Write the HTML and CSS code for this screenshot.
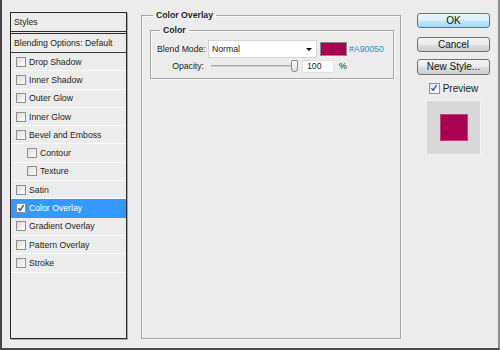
FILE: index.html
```html
<!DOCTYPE html>
<html>
<head>
<meta charset="utf-8">
<link rel="stylesheet" href="styles.css">
</head>
<body>
<div class="window">
  <div class="styles-panel">
    <div class="hdr">Styles</div>
    <div class="blend">Blending Options: Default</div>
    <div class="row"><span class="cb"></span>Drop Shadow</div>
    <div class="row"><span class="cb"></span>Inner Shadow</div>
    <div class="row"><span class="cb"></span>Outer Glow</div>
    <div class="row"><span class="cb"></span>Inner Glow</div>
    <div class="row"><span class="cb"></span>Bevel and Emboss</div>
    <div class="row sub"><span class="cb"></span>Contour</div>
    <div class="row sub"><span class="cb"></span>Texture</div>
    <div class="row"><span class="cb"></span>Satin</div>
    <div class="row sel"><span class="cb checked"><svg viewBox="0 0 8 8" width="8" height="8"><path d="M1.5 4.2 L3.2 6.3 L6.6 1.2" fill="none" stroke="#2c4f9e" stroke-width="1.3"/></svg></span>Color Overlay</div>
    <div class="row"><span class="cb"></span>Gradient Overlay</div>
    <div class="row"><span class="cb"></span>Pattern Overlay</div>
    <div class="row"><span class="cb"></span>Stroke</div>
  </div>

  <fieldset class="group outer">
    <legend>Color Overlay</legend>
    <fieldset class="group inner">
      <legend>Color</legend>
      <div class="frow">
        <span class="lbl">Blend Mode:</span>
        <div class="select"><span>Normal</span><span class="arrow"></span></div>
        <span class="swatch"></span>
        <span class="hex">#A90050</span>
      </div>
      <div class="frow r2">
        <span class="lbl">Opacity:</span>
        <div class="slider"><span class="track"></span><span class="thumb"></span></div>
        <div class="num">100</div>
        <span class="pct">%</span>
      </div>
    </fieldset>
  </fieldset>

  <div class="buttons">
    <div class="btn ok">OK</div>
    <div class="btn cancel">Cancel</div>
    <div class="btn newstyle">New Style...</div>
    <div class="preview"><span class="cb big checked"><svg viewBox="0 0 8 8" width="8" height="8"><path d="M1.5 4.2 L3.2 6.3 L6.6 1.2" fill="none" stroke="#2c4f9e" stroke-width="1.3"/></svg></span>Preview</div>
    <div class="pbox"><span class="pswatch"></span></div>
  </div>
</div>
</body>
</html>
```

FILE: styles.css
```css
html, body {
  margin: 0;
  padding: 0;
}
body {
  background: #ececec;
  font-family: "Liberation Sans", Arial, sans-serif;
  font-size: 8.7px;
  color: #1c1c1c;
}
.window {
  width: 500px;
  height: 350px;
  box-sizing: border-box;
  border-left: 2px solid #4a4248;
  border-bottom: 2px solid #4a4a4a;
  border-right: 2px solid #8c8c8c;
  padding-top: 9px;
  display: flex;
  align-items: flex-start;
}

/* left styles list */
.styles-panel {
  margin-left: 8px;
  margin-top: 3px;
  width: 117px;
  height: 327px;
  box-sizing: border-box;
  border: 1px solid #2a2a2a;
  box-shadow: 1px 1px 0 #a8a8a8;
  flex-shrink: 0;
}
.hdr {
  height: 19px;
  box-sizing: border-box;
  border-bottom: 1px solid #2a2a2a;
  padding-left: 3px;
  line-height: 18px;
}
.blend {
  margin-top: 1px;
  height: 20px;
  box-sizing: border-box;
  border-top: 1px solid #2a2a2a;
  border-bottom: 1px solid #3a3a3a;
  padding-left: 3px;
  line-height: 18px;
  white-space: nowrap;
}
.row {
  height: 18.3px;
  box-sizing: border-box;
  border-bottom: 1px solid #fbfbfb;
  display: flex;
  align-items: center;
  padding-left: 5px;
  white-space: nowrap;
}
.row.sub {
  padding-left: 16px;
}
.row.sel {
  background: #3399ff;
  color: #ffffff;
  border-bottom-color: #3399ff;
}
.cb {
  width: 8px;
  height: 8px;
  border: 1px solid #8e8f8f;
  background: linear-gradient(135deg, #dcdcdc, #fdfdfd);
  margin-right: 3px;
  flex-shrink: 0;
  display: flex;
  align-items: center;
  justify-content: center;
}
.cb svg {
  display: block;
}
.cb.checked {
  background: linear-gradient(135deg, #e4e4e4, #ffffff);
}

/* group boxes */
.group {
  margin: 0;
  border: 1px solid #a3a3a3;
  box-shadow: 1px 1px 0 #fafafa, inset 1px 1px 0 #fafafa;
  min-inline-size: 0;
}
.group legend {
  font-weight: bold;
  line-height: 12px;
  padding: 0 3px;
  margin-left: 3px;
}
.outer {
  margin-left: 14px;
  width: 260px;
  height: 330px;
  box-sizing: border-box;
  padding: 3px 6px 0 8px;
  flex-shrink: 0;
}
.inner {
  width: 244px;
  box-sizing: border-box;
  padding: 4px 6px 5px 6px;
}
.frow {
  display: flex;
  align-items: center;
  height: 18px;
  white-space: nowrap;
}
.frow.r2 {
  margin-top: 1px;
  height: 14px;
}
.lbl {
  width: 47px;
  text-align: right;
  flex-shrink: 0;
  white-space: nowrap;
}
.select {
  margin-left: 4px;
  width: 109px;
  height: 18px;
  box-sizing: border-box;
  background: #ffffff;
  border: 1px solid #d4d4d4;
  display: flex;
  align-items: center;
  justify-content: space-between;
  padding: 0 4px 0 3px;
  flex-shrink: 0;
}
.arrow {
  width: 0;
  height: 0;
  border-left: 3px solid transparent;
  border-right: 3px solid transparent;
  border-top: 3px solid #000;
}
.swatch {
  margin-left: 3px;
  width: 27px;
  height: 14px;
  box-sizing: border-box;
  background: #a90050;
  border: 1px solid #8a8a8a;
  flex-shrink: 0;
}
.hex {
  margin-left: 2px;
  color: #2a8fb3;
}
.slider {
  margin-left: 7px;
  width: 87px;
  height: 14px;
  display: flex;
  align-items: center;
  justify-content: flex-end;
  position: relative;
  flex-shrink: 0;
}
.track {
  position: absolute;
  left: 0;
  right: 2px;
  top: 6px;
  height: 2px;
  background: #d0d0d0;
  border-top: 1px solid #a8a8a8;
  box-sizing: border-box;
}
.thumb {
  position: relative;
  width: 7px;
  height: 12px;
  box-sizing: border-box;
  border: 1px solid #8a8a8a;
  border-radius: 1px 1px 3px 3px;
  background: linear-gradient(#fbfbfb, #dedede);
}
.num {
  margin-left: 4px;
  width: 32px;
  height: 13px;
  box-sizing: border-box;
  background: #ffffff;
  border: 1px solid #e0e0e0;
  padding-left: 4px;
  line-height: 11px;
  flex-shrink: 0;
}
.pct {
  margin-left: 5px;
}

/* right buttons */
.buttons {
  margin-left: 16px;
  width: 73px;
  display: flex;
  flex-direction: column;
  align-items: center;
  font-size: 10px;
  flex-shrink: 0;
}
.btn {
  width: 73px;
  height: 15px;
  box-sizing: border-box;
  border: 1px solid #707070;
  border-radius: 3px;
  background: linear-gradient(#f3f3f3 0%, #ebebeb 50%, #dddddd 51%, #cfcfcf 100%);
  text-align: center;
  line-height: 13px;
  color: #111;
}
.btn.ok {
  margin-top: 4px;
  border-color: #3c7fb1;
  background: linear-gradient(#eaf6fd 0%, #d9f0fc 50%, #bee6fd 51%, #a7d9f5 100%);
}
.btn.cancel {
  margin-top: 9px;
}
.btn.newstyle {
  margin-top: 7px;
  height: 16px;
  line-height: 14px;
}
.preview {
  margin-top: 7px;
  display: flex;
  align-items: center;
  height: 12px;
}
.cb.big {
  width: 9px;
  height: 9px;
  margin-right: 3px;
  border-color: #8e8f8f;
}
.pbox {
  margin-top: 6px;
  width: 55px;
  height: 55px;
  box-sizing: border-box;
  background: #d8d8d8;
  border: 1px solid #f2f2f2;
  display: flex;
  align-items: center;
  justify-content: center;
}
.pswatch {
  width: 28px;
  height: 27px;
  box-sizing: border-box;
  background: #a90050;
  border: 1px solid #c2407e;
}
```
